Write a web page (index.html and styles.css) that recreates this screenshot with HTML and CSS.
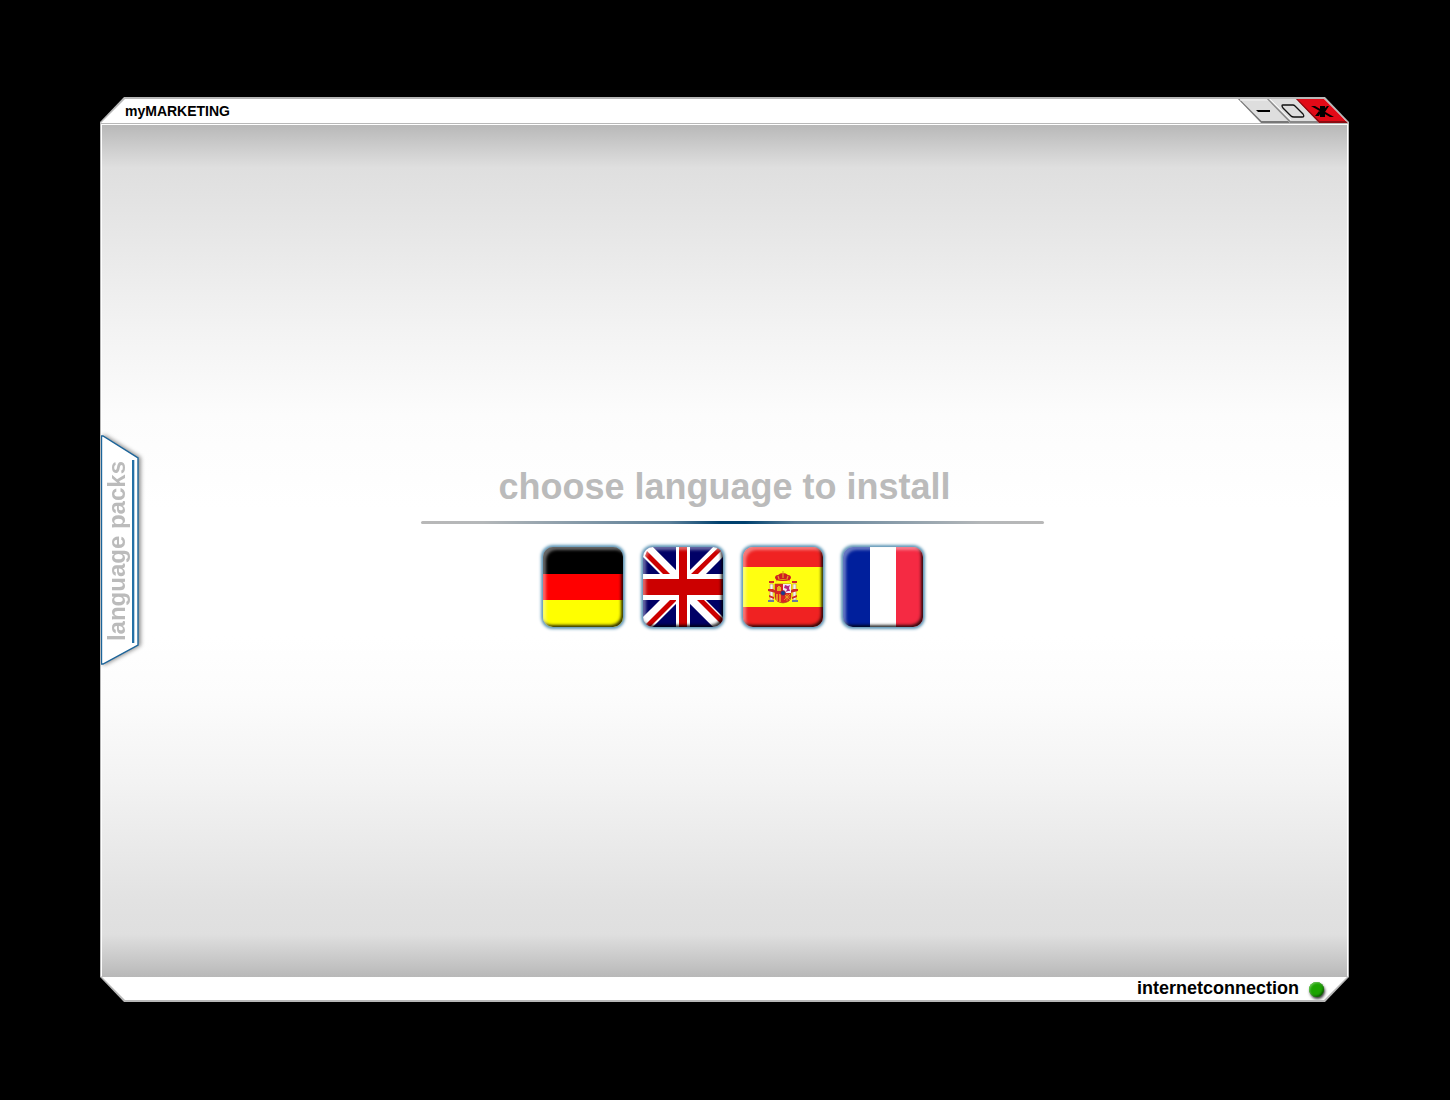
FILE: index.html
```html
<!DOCTYPE html>
<html lang="en">
<head>
<meta charset="utf-8">
<title>myMARKETING</title>
<link rel="stylesheet" href="styles.css">
</head>
<body>
<div class="window">
  <div class="frame">
    <header class="titlebar">
      <span class="title">myMARKETING</span>
      <div class="controls">
        <button class="control" type="button" aria-label="Minimize">
          <svg viewBox="0 0 52 24" width="52" height="24"><path fill="#dedede" d="M0 0H30L52 24H23z"/><path d="M0 0L23 23H52" fill="none" stroke="#777" stroke-width="2"/><path d="M2 1H30" stroke="#f4f4f4"/><path d="M18 11H32V13H20z"/></svg>
        </button>
        <button class="control" type="button" aria-label="Maximize">
          <svg viewBox="0 0 52 24" width="52" height="24"><path fill="#dedede" d="M0 0H30L52 24H23z"/><path d="M0 0L23 23H52" fill="none" stroke="#888" stroke-width="2"/><path d="M3 0L24 21" stroke="#f8f8f8"/><path d="M16 6H26Q27 6 28 7L36 15Q38 18 35 18H27Q25 18 24 17L16 9Q14 6 16 6z" fill="none" stroke="#111" stroke-width="1.300"/></svg>
        </button>
        <button class="control" type="button" aria-label="Close">
          <svg viewBox="0 0 52 24" width="52" height="24"><path fill="#e20a17" d="M0 0H30L52 24H23z"/><path d="M0 0L23 23H52" fill="none" stroke="#8c0c12" stroke-width="2"/><path d="M15 7H19L38 18H34z"/><path d="M24 7H29V18H24z"/><path d="M19 17H23L25 13L23 12zM28 10L31 7H33L29 13z"/></svg>
        </button>
      </div>
    </header>
    <main class="stage">
      <button class="tab" type="button">
        <svg class="tab-shape" viewBox="0 0 46 238" width="46" height="238" aria-hidden="true"><path d="M1.500 2H3L38 24V211L3 230H1.500z" fill="#fff" stroke="#1c659b" stroke-width="1.4"/><path d="M33 26V209" stroke="#2470a6" stroke-width="2"/><path d="M34.500 26V209" stroke="#b9d2e4"/></svg>
        <span class="tab-text">language packs</span>
      </button>
      <section class="chooser">
        <h1 class="heading">choose language to install</h1>
        <div class="rule"></div>
        <div class="flags">
          <button class="flag" type="button" aria-label="Deutsch">
            <svg viewBox="0 0 80 80"><path d="M0 0H80V27H0z"/><path fill="#f00" d="M0 27H80V53H0z"/><path fill="#ff0" d="M0 53H80V80H0z"/></svg>
          </button>
          <button class="flag" type="button" aria-label="English">
            <svg viewBox="0 0 80 80"><path fill="#006" d="M0 0H80V80H0z"/><path stroke="#fff" stroke-width="14" d="M-2 -2L82 82M82 -2L-2 82"/><path fill="#c00" d="M4 4L27 27H20L2 9zM76 0L79 3L55 27H48zM2 78L27 53H34L7 80zM54 53H61L80 72V79z"/><path fill="#fff" d="M33 0H47V80H33zM0 27H80V53H0z"/><path fill="#c00" d="M36 0H44V80H36zM0 32H80V48H0z"/></svg>
          </button>
          <button class="flag" type="button" aria-label="Español">
            <svg viewBox="0 0 80 80"><path fill="#f02222" d="M0 0H80V80H0z"/><path fill="#ff1" d="M0 20H80V60H0z"/>
              <g fill="#f4f4ee" stroke="#b88c6c" stroke-width=".6"><path d="M27 37H30V53H27zM50 37H53V53H50z"/></g>
              <path fill="#d32a25" d="M26 34H31V36H26zM49 34H54V36H49zM25 42H30L33 44V46L25 44zM55 42H50L47 44V46L55 44zM26 48L31 50V52L26 50zM54 48L49 50V52L54 50z"/>
              <path fill="#6c7c9c" d="M25 53H31V55H25zM49 53H55V55H49z"/>
              <path fill="#cf1d24" d="M34 34L32 31Q32 28 35 28Q37 26 40 26Q43 26 45 28Q48 28 48 31L46 34z"/>
              <path d="M33 34Q40 31 47 34M35 29L36 32M40 24V31M45 29L44 32" fill="none" stroke="#e0a41c" stroke-width="1.200"/>
              <path fill="#d92424" stroke="#a54220" stroke-width=".6" d="M32 37H48V50Q48 55 40 56Q32 55 32 50z"/>
              <path fill="#f2eaf4" d="M40 37H48V46H40z"/><path fill="#b42583" d="M42 38L45 39L47 38L46 41L47 44H45L43 45L44 42L41 41z"/>
              <path stroke="#f4cc22" stroke-width="1.300" d="M34 47V54M37 47V55"/><path fill="none" stroke="#e9ac20" stroke-width=".8" d="M41 47L47 53M47 47L41 53M42 50H47M44 47V54"/>
              <path fill="#e6af20" d="M34 40H35V39H37V40H38V44H34z"/><circle cx="40" cy="46" r="2.500" fill="#173d8e" stroke="#c11d21" stroke-width=".7"/>
            </svg>
          </button>
          <button class="flag" type="button" aria-label="Français">
            <svg viewBox="0 0 80 80"><path fill="#001f9c" d="M0 0H27V80H0z"/><path fill="#fff" d="M27 0H53V80H27z"/><path fill="#f52a43" d="M53 0H80V80H53z"/></svg>
          </button>
        </div>
      </section>
    </main>
    <footer class="statusbar">
      <span>internetconnection</span>
      <span class="lamp"></span>
    </footer>
  </div>
</div>
</body>
</html>
```
FILE: styles.css
```css
* { box-sizing: border-box; }

body {
  margin: 0;
  min-height: 100vh;
  padding: 97px 101px 98px 100px;
  display: flex;
  background: #000;
  font-family: "Liberation Sans", Arial, sans-serif;
  font-weight: bold;
}

button {
  padding: 0;
  border: 0;
  background: none;
  font: inherit;
  cursor: pointer;
}

svg { display: block; }

.window {
  flex: 1;
  display: flex;
  padding: 2px 1px;
  background: #b8b8b8;
  clip-path: polygon(24px 0, calc(100% - 24px) 0, 100% 25px, 100% calc(100% - 25px), calc(100% - 24px) 100%, 24px 100%, 0 calc(100% - 25px), 0 25px);
}

.frame {
  flex: 1;
  display: flex;
  flex-direction: column;
  background: #fff;
  clip-path: polygon(24px 0, calc(100% - 24px) 0, 100% 24px, 100% calc(100% - 24px), calc(100% - 24px) 100%, 24px 100%, 0 calc(100% - 24px), 0 24px);
}

.titlebar {
  display: flex;
  justify-content: space-between;
  height: 25px;
  padding-left: 24px;
  border-bottom: 1px solid #b8b8b8;
}

.title {
  font-size: 14px;
  line-height: 24px;
}

.controls { display: flex; }

.control {
  width: 52px;
  height: 24px;
  clip-path: polygon(0 0, 30px 0, 100% 100%, 23px 100%);
}

.control + .control { margin-left: -23px; }

.stage {
  flex: 1;
  display: flex;
  justify-content: center;
  align-items: center;
  position: relative;
  margin: 1px 1px 0;
  padding: 0 0 10px 16px;
  background: linear-gradient(#b8b8b8, #c8c8c8 2%, #dfdfdf 5%, #e3e3e3 9%, #f3f3f3 24%, #fcfcfc 34%, #fff 45%, #fff 60%, #fcfcfc 67%, #f3f3f3 77%, #e2e2e2 91%, #dfdfdf 95%, #c8c8c8 98%, #b8b8b8);
}

.tab {
  position: absolute;
  left: -2px;
  top: calc(50% - 117px);
  width: 40px;
  height: 234px;
  display: flex;
  justify-content: center;
  align-items: center;
  padding-right: 6px;
  color: #bbb;
  font-size: 24px;
}

.tab-shape {
  position: absolute;
  left: 0;
  top: 0;
  filter: drop-shadow(2px 0 2px #888);
}

.tab-text {
  position: relative;
  writing-mode: vertical-rl;
  transform: rotate(180deg);
  line-height: 28px;
}

.chooser {
  display: flex;
  flex-direction: column;
  align-items: center;
  width: 623px;
}

.heading {
  margin: 0 16px 12px 0;
  color: #bbb;
  font-size: 36px;
  line-height: 44px;
}

.rule {
  width: 100%;
  height: 3px;
  border-radius: 2px;
  background: linear-gradient(90deg, #b8b8b8, #b4b7b9 10%, #5a7e98 40%, #00406e 48%, #00406e 52%, #5a7e98 60%, #b4b7b9 90%, #b8b8b8);
}

.flags {
  display: flex;
  gap: 20px;
  margin-top: 23px;
}

.flag {
  position: relative;
  width: 80px;
  height: 80px;
  border-radius: 10px;
  box-shadow: 0 0 3px 2px #5e96b6;
}

.flag svg {
  width: 80px;
  height: 80px;
  border-radius: 10px;
}

.flag::after {
  content: "";
  position: absolute;
  inset: 0;
  border-radius: 10px;
  box-shadow: inset 3px 3px 3px rgba(255, 255, 255, .4), inset -2px -2px 3px rgba(0, 0, 0, .8);
}

.statusbar {
  display: flex;
  justify-content: flex-end;
  gap: 10px;
  height: 23px;
  padding-right: 24px;
  font-size: 18px;
  line-height: 22px;
}

.lamp {
  width: 15px;
  height: 15px;
  margin-top: 5px;
  border-radius: 50%;
  background: #1ca400;
  box-shadow: inset 1px 1px 2px #68c455, inset -1px -1px 2px #0a5200, 1px 2px 3px #333;
}
```
